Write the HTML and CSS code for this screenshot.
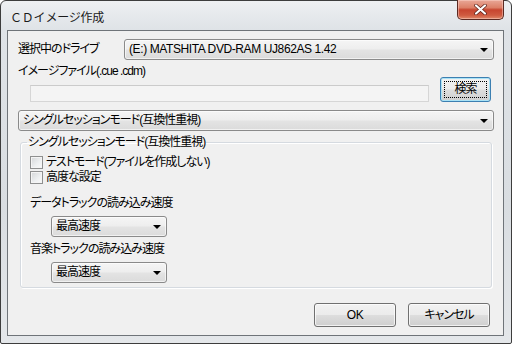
FILE: index.html
```html
<!DOCTYPE html>
<html lang="ja">
<head>
  <meta charset="UTF-8">
  <title>CDイメージ作成</title>
  <link rel="stylesheet" href="styles.css">
</head>
<body>
  <div class="window">
    <!-- Title bar -->
    <div class="titlebar">
      <span class="title">ＣＤイメージ作成</span>
      <span class="close-btn">
        <svg width="13" height="11" viewBox="0 0 13 11">
          <path d="M2 1.5 L11 9.5 M11 1.5 L2 9.5" stroke="#5a1f16" stroke-width="3.6" stroke-linecap="round"/>
          <path d="M2 1.5 L11 9.5 M11 1.5 L2 9.5" stroke="#fff" stroke-width="2.2" stroke-linecap="round"/>
        </svg>
      </span>
    </div>

    <div class="client">
      <!-- Drive -->
      <div class="drive-row">
        <span class="drive-label">選択中のドライブ</span>
        <div class="combo drive-combo">
          <span class="combo-text latin">(E:) MATSHITA DVD-RAM UJ862AS 1.42</span>
          <i class="arrow"></i>
        </div>
      </div>

      <!-- Image file -->
      <div class="file-row">
        <div class="file-col">
          <div class="file-label">イメージファイル(.cue .cdm)</div>
          <div class="text-input"></div>
        </div>
        <div class="btn btn-default"><span class="focus-ring">検索</span></div>
      </div>

      <!-- Mode -->
      <div class="combo mode-combo">
        <span class="combo-text">シングルセッションモード(互換性重視)</span>
        <i class="arrow"></i>
      </div>

      <fieldset class="group">
        <legend>シングルセッションモード(互換性重視)</legend>
        <div class="check"><span class="box"></span>テストモード(ファイルを作成しない)</div>
        <div class="check"><span class="box"></span>高度な設定</div>

        <div class="speed-label first">データトラックの読み込み速度</div>
        <div class="combo speed-combo">
          <span class="combo-text">最高速度</span>
          <i class="arrow"></i>
        </div>

        <div class="speed-label">音楽トラックの読み込み速度</div>
        <div class="combo speed-combo">
          <span class="combo-text">最高速度</span>
          <i class="arrow"></i>
        </div>
      </fieldset>

      <!-- Buttons -->
      <div class="actions">
        <div class="btn btn-dialog latin">OK</div>
        <div class="btn btn-dialog">キャンセル</div>
      </div>
    </div>
  </div>
</body>
</html>
```

FILE: styles.css
```css
* {
  margin: 0;
  padding: 0;
  box-sizing: border-box;
}

body {
  width: 512px;
  height: 344px;
  overflow: hidden;
  background: #ffffff;
  font-family: "Liberation Sans", "Noto Sans CJK JP", sans-serif;
  font-size: 12px;
  letter-spacing: -1px;
  color: #000;
  font-feature-settings: "palt";
}

.window {
  width: 512px;
  height: 344px;
  border: 1px solid #3d3d3d;
  border-radius: 6px 6px 2px 2px;
  background: linear-gradient(180deg, #eef0f2 0, #dfe3e7 28px, #d9dde1 60%, #e4e7ea 100%);
  padding: 0 7px 7px 6px;
  display: flex;
  flex-direction: column;
}

.titlebar {
  height: 29px;
  display: flex;
  align-items: flex-start;
}

.title {
  padding: 8px 0 0 3px;
  font-size: 12px;
  line-height: 15px;
  letter-spacing: -0.2px;
  color: #1a1a1a;
  font-feature-settings: normal;
  font-family: "Noto Sans CJK JP", sans-serif;
}

.close-btn {
  margin-left: auto;
  margin-top: -1px;
  width: 47px;
  height: 20px;
  border: 1px solid #5b2a22;
  border-top: none;
  border-radius: 0 0 5px 5px;
  background: linear-gradient(180deg, #e9a797 0, #dc8068 40%, #c7452f 52%, #cf5a40 80%, #e08a6a 100%);
  box-shadow: inset 0 0 0 1px rgba(255, 220, 210, 0.45);
  display: flex;
  align-items: center;
  justify-content: center;
}

.client {
  flex: 1;
  border: 1px solid #6f7479;
  background: #f0f0f0;
  padding: 8px 9px 0 10px;
  display: flex;
  flex-direction: column;
}

/* combobox */
.combo {
  height: 21px;
  border: 1px solid #8a8a8a;
  border-radius: 3px;
  background: linear-gradient(180deg, #f5f5f5 0, #eeeeee 45%, #e3e3e3 55%, #dbdbdb 100%);
  box-shadow: inset 0 0 0 1px rgba(255, 255, 255, 0.6);
  display: flex;
  align-items: center;
  padding-left: 4px;
}

.combo-text {
  line-height: 15px;
  white-space: nowrap;
}

.arrow {
  margin-left: auto;
  margin-right: 5px;
  width: 0;
  height: 0;
  border-left: 4px solid transparent;
  border-right: 4px solid transparent;
  border-top: 4px solid #000;
}

.drive-row {
  display: flex;
  align-items: center;
}

.drive-label {
  width: 106px;
  line-height: 15px;
}

.drive-combo {
  flex: 1;
}

.latin {
  letter-spacing: -0.4px;
}

.file-row {
  display: flex;
  align-items: flex-end;
  margin-top: 4px;
}

.file-col {
  flex: 1;
}

.file-label {
  line-height: 15px;
}

.text-input {
  height: 17px;
  margin: 6px 11px 0 12px;
  border: 1px solid #d6d6d6;
  border-top-color: #cbcbcb;
  background: #f4f4f4;
}

.btn {
  display: flex;
  align-items: center;
  justify-content: center;
  border: 1px solid #707070;
  border-radius: 3px;
  background: linear-gradient(180deg, #f2f2f2 0, #ebebeb 48%, #dddddd 52%, #cfcfcf 100%);
  box-shadow: inset 0 0 0 1px rgba(255, 255, 255, 0.7);
  line-height: 15px;
}

.btn-default {
  width: 51px;
  height: 25px;
  margin-right: 3px;
  border-color: #3c7fb1;
  box-shadow: inset 0 0 0 1px #a9e2f6;
  padding: 3px;
}

.focus-ring {
  flex: 1;
  align-self: stretch;
  display: flex;
  align-items: center;
  justify-content: center;
  border: 1px dotted #000;
}

.mode-combo {
  margin-top: 8px;
}

.group {
  margin: 4px 2px 0 2px;
  padding: 5px 9px 4px 9px;
  border: 1px solid #d5dae0;
  border-radius: 3px;
  box-shadow: 1px 1px 0 #ffffff, inset 1px 1px 0 #ffffff;
}

.group legend {
  margin-left: -3px;
  padding: 0 1px;
  line-height: 15px;
}

.check {
  display: flex;
  align-items: center;
  line-height: 15px;
}

.box {
  width: 13px;
  height: 13px;
  margin-right: 3px;
  border: 1px solid #8e8f8f;
  background: linear-gradient(135deg, #d4d6d8 0, #eef0f1 60%, #fafafa 100%);
  box-shadow: inset 0 0 0 1px #f4f4f4;
}

.speed-label {
  line-height: 15px;
  margin-top: 5px;
}

.speed-label.first {
  margin-top: 11px;
}

.speed-combo {
  width: 116px;
  margin: 5px 0 0 21px;
}

.speed-combo + .speed-label {
  margin-top: 5px;
}

.actions {
  display: flex;
  justify-content: flex-end;
  gap: 12px;
  margin-top: 15px;
  padding-right: 4px;
}

.btn-dialog {
  width: 82px;
  height: 24px;
}
```
